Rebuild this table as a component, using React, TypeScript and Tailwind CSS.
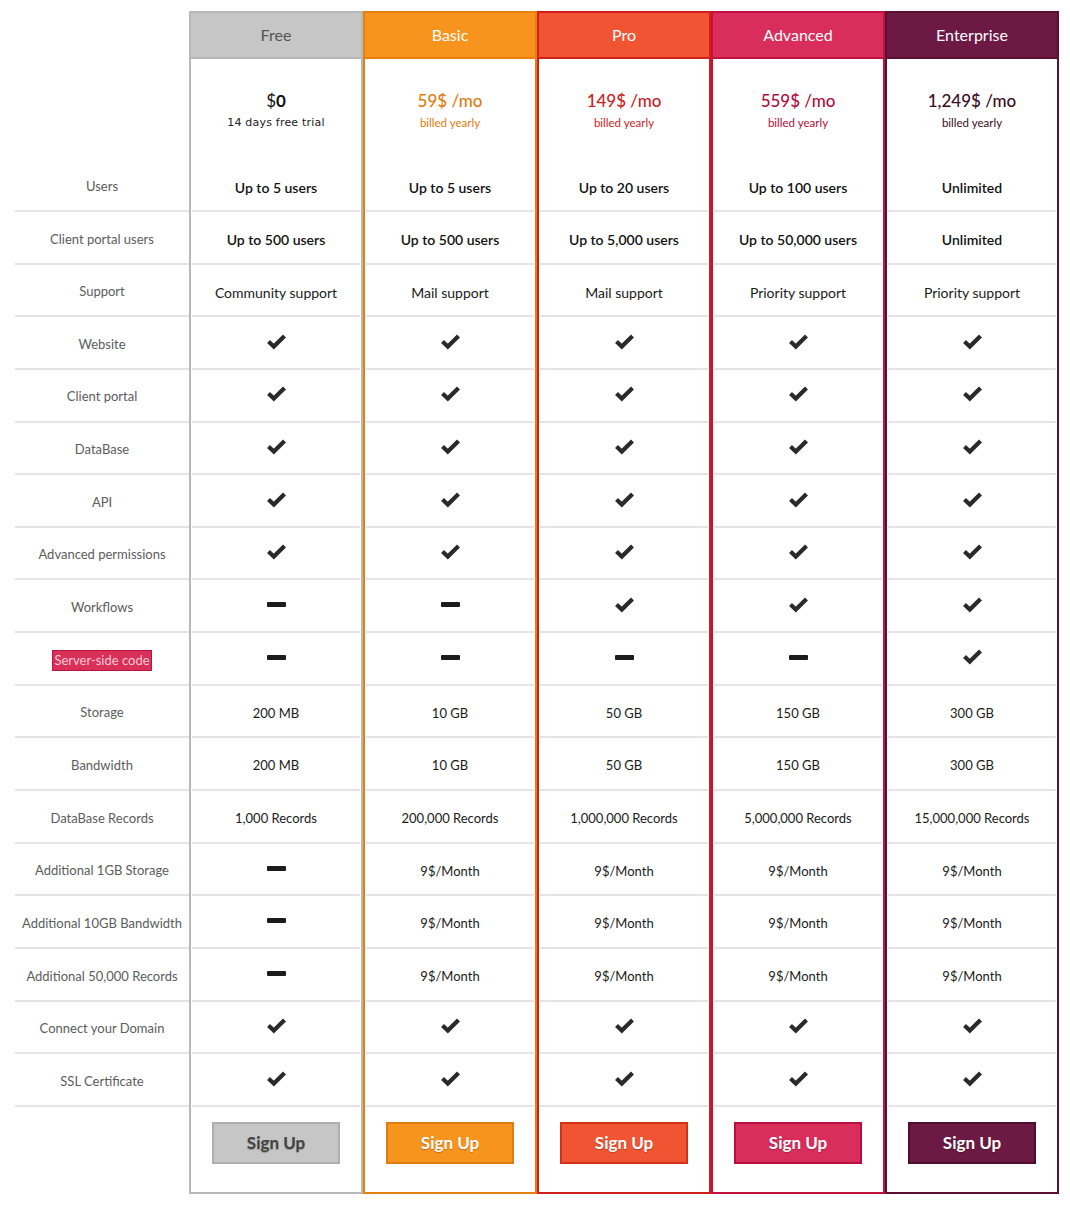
import React from 'react';

type Cell = 'y' | 'n' | string;

const FONT = "font-['Lato','Open_Sans',sans-serif]";

const PLANS = [
  {
    name: 'Free',
    head: 'bg-[#c6c6c6] text-[#555] border-[#b8b8b8]',
    border: 'border-[#b8b8b8]',
    price: 'text-[#111]',
    btn: 'bg-[#c6c6c6] border-[#adadad] text-[#444]',
  },
  {
    name: 'Basic',
    head: 'bg-[#f7941d] text-white border-[#e8800f]',
    border: 'border-[#e8800f]',
    price: 'text-[#e27a0c]',
    btn: 'bg-[#f7941d] border-[#e07d10] text-white',
  },
  {
    name: 'Pro',
    head: 'bg-[#f15433] text-white border-[#d0201a]',
    border: 'border-[#d0201a]',
    price: 'text-[#cc1d1d]',
    btn: 'bg-[#f15433] border-[#d0321a] text-white',
  },
  {
    name: 'Advanced',
    head: 'bg-[#d92d5b] text-white border-[#c3103f]',
    border: 'border-[#c3103f]',
    price: 'text-[#b30d3a]',
    btn: 'bg-[#d92d5b] border-[#b8103e] text-white',
  },
  {
    name: 'Enterprise',
    head: 'bg-[#6c1943] text-white border-[#5a0f33]',
    border: 'border-[#5a0f33]',
    price: 'text-[#3a0c22]',
    btn: 'bg-[#6c1943] border-[#4e0d2c] text-white',
  },
];

const PRICES: [string, string][] = [
  ['$0', '14 days free trial'],
  ['59$ /mo', 'billed yearly'],
  ['149$ /mo', 'billed yearly'],
  ['559$ /mo', 'billed yearly'],
  ['1,249$ /mo', 'billed yearly'],
];

const PAID = ['n', '9$/Month', '9$/Month', '9$/Month', '9$/Month'];

// style: b = semibold 14, r = regular 14, s = regular 13
const ROWS: { label: string; style: 'b' | 'r' | 's'; cells: Cell[]; mark?: boolean }[] = [
  { label: 'Users', style: 'b', cells: ['Up to 5 users', 'Up to 5 users', 'Up to 20 users', 'Up to 100 users', 'Unlimited'] },
  { label: 'Client portal users', style: 'b', cells: ['Up to 500 users', 'Up to 500 users', 'Up to 5,000 users', 'Up to 50,000 users', 'Unlimited'] },
  { label: 'Support', style: 'r', cells: ['Community support', 'Mail support', 'Mail support', 'Priority support', 'Priority support'] },
  { label: 'Website', style: 'r', cells: ['y', 'y', 'y', 'y', 'y'] },
  { label: 'Client portal', style: 'r', cells: ['y', 'y', 'y', 'y', 'y'] },
  { label: 'DataBase', style: 'r', cells: ['y', 'y', 'y', 'y', 'y'] },
  { label: 'API', style: 'r', cells: ['y', 'y', 'y', 'y', 'y'] },
  { label: 'Advanced permissions', style: 'r', cells: ['y', 'y', 'y', 'y', 'y'] },
  { label: 'Workflows', style: 'r', cells: ['n', 'n', 'y', 'y', 'y'] },
  { label: 'Server-side code', style: 'r', cells: ['n', 'n', 'n', 'n', 'y'], mark: true },
  { label: 'Storage', style: 's', cells: ['200 MB', '10 GB', '50 GB', '150 GB', '300 GB'] },
  { label: 'Bandwidth', style: 's', cells: ['200 MB', '10 GB', '50 GB', '150 GB', '300 GB'] },
  { label: 'DataBase Records', style: 's', cells: ['1,000 Records', '200,000 Records', '1,000,000 Records', '5,000,000 Records', '15,000,000 Records'] },
  { label: 'Additional 1GB Storage', style: 's', cells: PAID },
  { label: 'Additional 10GB Bandwidth', style: 's', cells: PAID },
  { label: 'Additional 50,000 Records', style: 's', cells: PAID },
  { label: 'Connect your Domain', style: 'r', cells: ['y', 'y', 'y', 'y', 'y'] },
  { label: 'SSL Certificate', style: 'r', cells: ['y', 'y', 'y', 'y', 'y'] },
];

function Check() {
  return (
    <svg width="21" height="17" viewBox="0 0 21 17" className="-mt-[3px] block">
      <path d="M2.5 8.5 L7.8 13.5 L18.5 3" fill="none" stroke="#2a2a2a" strokeWidth="4.2" strokeLinejoin="miter" />
    </svg>
  );
}

function Dash() {
  return <div className="-mt-[2px] h-[5px] w-[19px] rounded-[1px] bg-[#1c1c1c]" />;
}

function CellValue({ v, style }: { v: Cell; style: 'b' | 'r' | 's' }) {
  if (v === 'y') return <Check />;
  if (v === 'n') return <Dash />;
  const cls =
    style === 'b'
      ? 'pt-[5px] text-[14px] font-semibold text-[#111]'
      : style === 'r'
        ? 'pt-[5px] text-[14px] text-[#1a1a1a]'
        : 'pt-[5px] text-[13px] text-[#1a1a1a]';
  return <span className={cls}>{v}</span>;
}

function PlanColumn({ i }: { i: number }) {
  const p = PLANS[i];
  const [price, sub] = PRICES[i];
  return (
    <div className={`flex w-[174px] flex-col border-2 ${p.border}`}>
      <div className={`-mx-[2px] -mt-[2px] flex h-[48px] items-center justify-center border-2 text-[16px] ${p.head}`}>
        {p.name}
      </div>
      <div className="flex h-[100px] flex-col items-center pt-[32px]">
        {i === 0 ? (
          <>
            <div className="text-[17px] leading-[20px] text-[#111]">
              $<span className="font-bold">0</span>
            </div>
            <div className="mt-[4px] font-['DejaVu_Sans',sans-serif] text-[11px] leading-[16px] tracking-[0.2px] text-[#222]">
              {sub}
            </div>
          </>
        ) : (
          <>
            <div className={`text-[17px] leading-[20px] font-medium ${p.price}`}>{price}</div>
            <div className={`mt-[4px] text-[11.5px] leading-[16px] ${p.price}`}>{sub}</div>
          </>
        )}
      </div>
      {ROWS.map((r, k) => (
        <div
          key={r.label}
          className={`mx-[1px] flex items-center justify-center border-b-2 border-[#e4e4e4] ${
            k === 0 ? 'h-[53px]' : 'h-[52.65px]'
          }`}
        >
          <CellValue v={r.cells[i]} style={r.style} />
        </div>
      ))}
      <div className="flex flex-1 justify-center pt-[15px]">
        <button
          type="button"
          className={`h-[42px] w-[128px] border-2 text-[17px] font-bold [text-shadow:0_1px_1px_rgba(0,0,0,0.25)] ${p.btn}`}
        >
          Sign Up
        </button>
      </div>
    </div>
  );
}

export default function App() {
  return (
    <div className={`flex h-[1207px] w-[1070px] bg-white pl-[15px] pt-[11px] ${FONT}`}>
      <div className="w-[174px]">
        <div className="h-[148px]" />
        {ROWS.map((r, k) => (
          <div
            key={r.label}
            className={`flex items-center justify-center border-b-2 border-[#e4e4e4] pt-[4px] text-[13px] text-[#5c5c5c] ${
              k === 0 ? 'h-[53px]' : 'h-[52.65px]'
            }`}
          >
            {r.mark ? (
              <span className="border border-[#b8143f] bg-[#d9305a] px-[1px] text-[#f3c9d3]">{r.label}</span>
            ) : (
              r.label
            )}
          </div>
        ))}
      </div>
      <div className="flex h-[1183px]">
        {PLANS.map((p, i) => (
          <PlanColumn key={p.name} i={i} />
        ))}
      </div>
    </div>
  );
}
